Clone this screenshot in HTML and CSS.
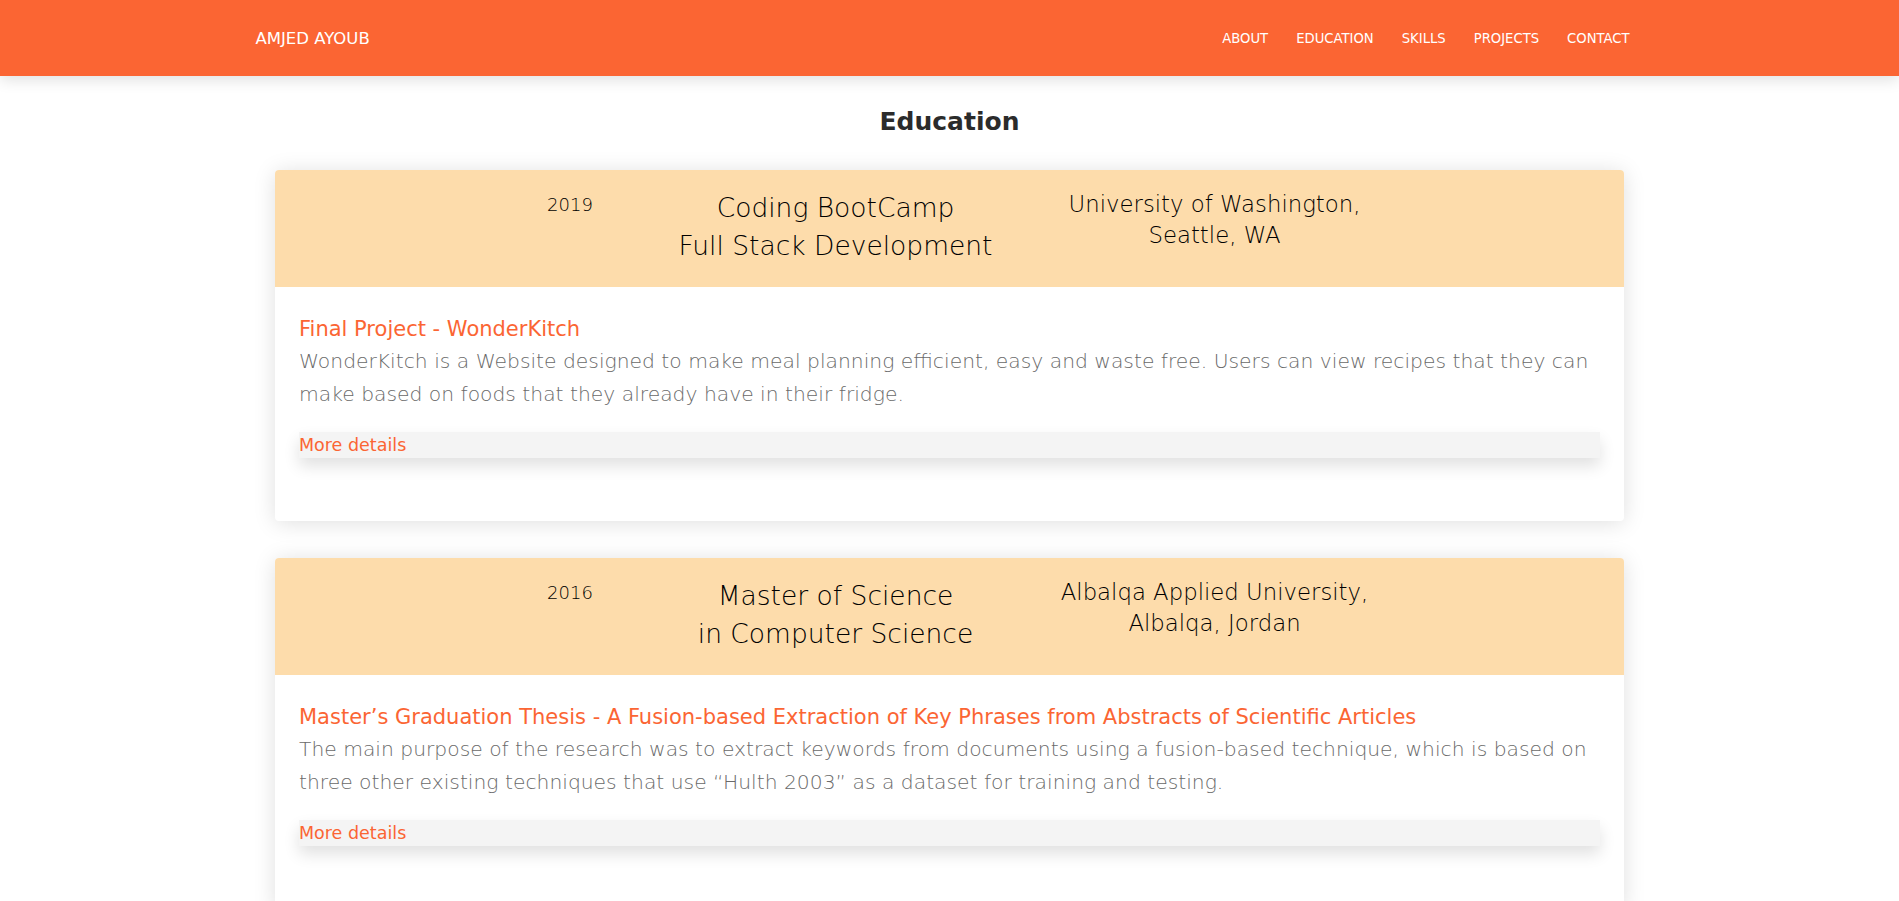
FILE: index.html
```html
<!DOCTYPE html>
<html lang="en">
<head>
<meta charset="utf-8">
<title>Amjed Ayoub - Education</title>
<link rel="stylesheet" href="styles.css">
</head>
<body>
<header class="navbar">
  <div class="nav-inner">
    <a class="brand" href="#">AMJED AYOUB</a>
    <nav>
      <ul class="nav-links">
        <li><a href="#">ABOUT</a></li>
        <li><a href="#">EDUCATION</a></li>
        <li><a href="#">SKILLS</a></li>
        <li><a href="#">PROJECTS</a></li>
        <li><a href="#">CONTACT</a></li>
      </ul>
    </nav>
  </div>
</header>
<main>
  <h1 class="section-title">Education</h1>
  <div class="cards">
    <article class="card">
      <div class="card-header">
        <div class="year">2019</div>
        <div class="degree">Coding BootCamp<br>Full Stack Development</div>
        <div class="school">University of Washington,<br>Seattle, WA</div>
      </div>
      <div class="card-body">
        <h2 class="project-title">Final Project - WonderKitch</h2>
        <p class="project-text">WonderKitch is a Website designed to make meal planning efficient, easy and waste free. Users can view recipes that they can make based on foods that they already have in their fridge.</p>
        <div class="details">More details</div>
      </div>
    </article>
    <article class="card">
      <div class="card-header">
        <div class="year">2016</div>
        <div class="degree">Master of Science<br>in Computer Science</div>
        <div class="school">Albalqa Applied University,<br>Albalqa, Jordan</div>
      </div>
      <div class="card-body">
        <h2 class="project-title">Master’s Graduation Thesis - A Fusion-based Extraction of Key Phrases from Abstracts of Scientific Articles</h2>
        <p class="project-text">The main purpose of the research was to extract keywords from documents using a fusion-based technique, which is based on three other existing techniques that use “Hulth 2003” as a dataset for training and testing.</p>
        <div class="details">More details</div>
      </div>
    </article>
  </div>
</main>
</body>
</html>
```

FILE: styles.css
```css
* { box-sizing: border-box; }
html, body { margin: 0; padding: 0; }
body {
  font-family: "DejaVu Sans", sans-serif;
  background: #fff;
  color: #222;
}
.navbar {
  background: #fb6533;
  height: 76px;
  box-shadow: 0 4px 14px rgba(0,0,0,0.12);
  position: relative;
  z-index: 2;
}
.nav-inner {
  width: 75%;
  margin: 0 auto;
  padding: 0 18px;
  height: 100%;
  display: flex;
  align-items: center;
  justify-content: space-between;
}
.brand {
  color: #fff;
  text-decoration: none;
  font-size: 16.5px;
}
.nav-links {
  list-style: none;
  margin: 0;
  padding: 0;
  display: flex;
}
.nav-links a {
  display: block;
  color: #fff;
  text-decoration: none;
  font-size: 13.2px;
  padding: 0 14px;
}
.section-title {
  text-align: center;
  font-size: 25px;
  font-weight: 700;
  color: #2b2b2b;
  margin: 0;
  padding: 30px 0 0;
  line-height: 32px;
  height: 94px;
}
.cards {
  width: 1349px;
  margin: 0 auto;
  display: flex;
  flex-direction: column;
  gap: 37px;
}
.card {
  border-radius: 4px;
  background: #fff;
  box-shadow: 0 2px 22px rgba(0,0,0,0.13);
  overflow: hidden;
}
.card-header {
  background: #fddcab;
  display: grid;
  grid-template-columns: 160px 371px 387px;
  align-items: start;
  padding: 18px 0 24px 215px;
  height: 117px;
  color: #000;
  text-align: center;
  font-weight: 200;
}
.year {
  font-size: 18px;
  line-height: 26px;
  margin-top: 4px;
}
.degree {
  font-size: 26.5px;
  line-height: 38px;
  margin-top: 1px;
}
.school {
  font-size: 22.8px;
  line-height: 31px;
  margin-top: 1px;
}
.card-body {
  padding: 28px 24px 63px;
}
.project-title {
  margin: 0;
  font-size: 21px;
  font-weight: 400;
  line-height: 28px;
  color: #fb6533;
}
.project-text {
  margin: 2px 0 0;
  font-size: 20.3px;
  font-weight: 200;
  line-height: 33px;
  color: #6a6a6a;
}
.details {
  margin-top: 21px;
  background: #f4f4f4;
  height: 26px;
  line-height: 26px;
  font-size: 17.5px;
  color: #fb6533;
  box-shadow: 0 8px 16px rgba(0,0,0,0.12);
}
```
